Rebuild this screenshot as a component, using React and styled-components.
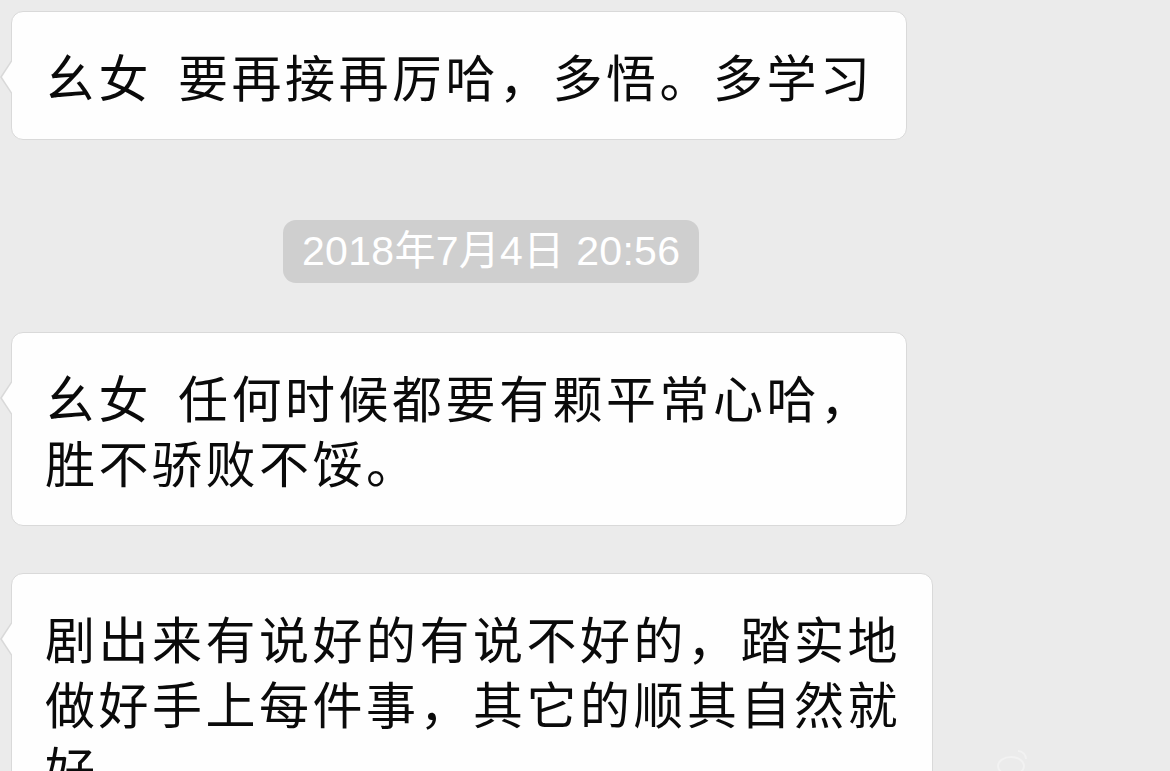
import React from "react";
import styled, { createGlobalStyle } from "styled-components";

const Global = createGlobalStyle`
  html, body {
    margin: 0;
    padding: 0;
    background: #ebebeb;
    overflow: hidden;
  }
  body {
    font-family: "Noto Sans CJK SC", "Noto Sans", sans-serif;
  }
`;

const Screen = styled.div`
  position: relative;
  width: 1170px;
  height: 771px;
  background: #ebebeb;
  overflow: hidden;
`;

const Feed = styled.div`
  display: flex;
  flex-direction: column;
  align-items: flex-start;
  padding: 11px 0 0 11px;
`;

const Bubble = styled.div`
  position: relative;
  box-sizing: border-box;
  width: ${(p) => p.$width}px;
  margin-top: ${(p) => p.$gap || 0}px;
  padding: 31px 20px 31px 33px;
  background: #fefefe;
  border: 1px solid #d9d9d9;
  border-radius: 12px;
  color: #0a0a0a;
  font-family: "Noto Sans CJK SC", "Noto Sans", sans-serif;
  font-size: 50px;
  line-height: 65px;
  letter-spacing: 3.5px;
  white-space: nowrap;

  &::before,
  &::after {
    content: "";
    position: absolute;
    top: 47px;
    width: 0;
    height: 0;
    border-style: solid;
  }
  &::before {
    left: -12px;
    border-width: 18px 12px 18px 0;
    border-color: transparent #d9d9d9 transparent transparent;
  }
  &::after {
    left: -10px;
    top: 48px;
    border-width: 17px 11px 17px 0;
    border-color: transparent #fefefe transparent transparent;
  }
`;

const Space = styled.span`
  display: inline-block;
  width: ${(p) => p.$w}px;
`;

const TimeRow = styled.div`
  display: flex;
  margin: 80px 0 49px 272px;
`;

const TimePill = styled.div`
  height: 63px;
  padding: 0 19px 0 19px;
  border-radius: 13px;
  background: #cfcfcf;
  color: #ffffff;
  font-family: "Liberation Sans", "Noto Sans CJK SC", sans-serif;
  font-size: 41px;
  line-height: 63px;
  letter-spacing: 0.3px;
  white-space: nowrap;
`;

const Watermark = styled.div`
  position: absolute;
  right: 140px;
  bottom: -10px;
  opacity: 0.35;
`;

export default function App() {
  return (
    <Screen>
      <Global />
      <Feed>
        <Bubble $width={896}>
          幺女<Space $w={26} />要再接再厉哈，多悟。多学习
        </Bubble>
        <TimeRow>
          <TimePill>2018年7月4日 20:56</TimePill>
        </TimeRow>
        <Bubble $width={896}>
          幺女<Space $w={26} />任何时候都要有颗平常心哈，
          <br />
          胜不骄败不馁。
        </Bubble>
        <Bubble $width={922} $gap={47}>
          剧出来有说好的有说不好的，踏实地
          <br />
          做好手上每件事，其它的顺其自然就
          <br />
          好。
        </Bubble>
      </Feed>
      <Watermark>
        <svg width="34" height="28" viewBox="0 0 34 28">
          <ellipse cx="15" cy="18" rx="13" ry="9" fill="none" stroke="#fff" strokeWidth="2" />
          <path d="M22 3 a8 8 0 0 1 8 8" fill="none" stroke="#fff" strokeWidth="2" />
        </svg>
      </Watermark>
    </Screen>
  );
}
